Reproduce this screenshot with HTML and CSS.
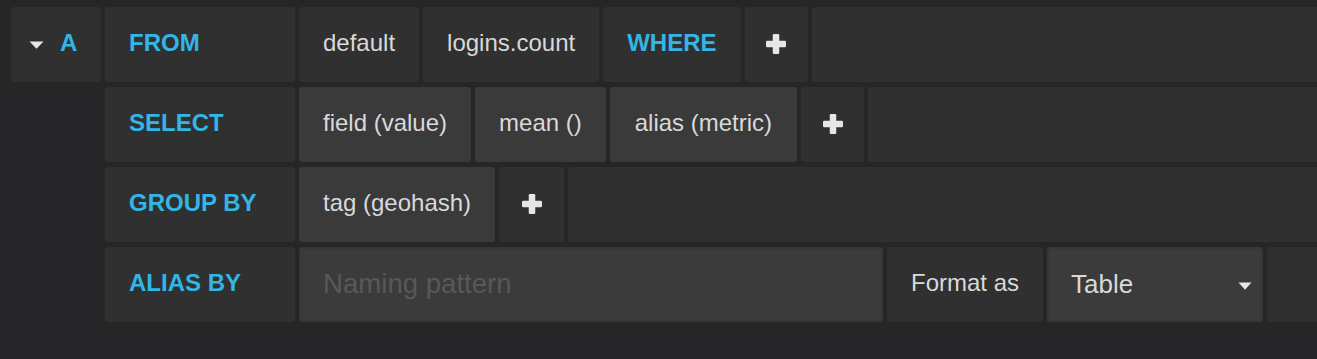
FILE: index.html
```html
<!DOCTYPE html>
<html>
<head>
<meta charset="utf-8">
<link rel="stylesheet" href="styles.css">
</head>
<body>
<div class="editor">
  <div class="row">
    <div class="refid">
      <svg class="caret" width="15" height="8" viewBox="0 0 15 8"><path d="M0.5 0.5 L14.5 0.5 L7.5 7.8 Z" fill="#e6e6e6"/></svg>
      <span class="refid-letter">A</span>
    </div>
    <div class="box label kw">FROM</div>
    <div class="box seg">default</div>
    <div class="box seg">logins.count</div>
    <div class="box seg kw">WHERE</div>
    <div class="box plus"><svg width="20" height="20" viewBox="0 0 20 20"><rect x="6.75" y="0" width="6.5" height="20" rx="1.2" fill="#e6e6e6"/><rect x="0" y="6.75" width="20" height="6.5" rx="1.2" fill="#e6e6e6"/></svg></div>
    <div class="box filler"></div>
  </div>
  <div class="row">
    <div class="spacer"></div>
    <div class="box label kw">SELECT</div>
    <div class="box seg light">field (value)</div>
    <div class="box seg light">mean ()</div>
    <div class="box seg light wide2">alias (metric)</div>
    <div class="box plus"><svg width="20" height="20" viewBox="0 0 20 20"><rect x="6.75" y="0" width="6.5" height="20" rx="1.2" fill="#e6e6e6"/><rect x="0" y="6.75" width="20" height="6.5" rx="1.2" fill="#e6e6e6"/></svg></div>
    <div class="box filler"></div>
  </div>
  <div class="row">
    <div class="spacer"></div>
    <div class="box label kw">GROUP BY</div>
    <div class="box seg light">tag (geohash)</div>
    <div class="box plus plus-wide"><svg width="20" height="20" viewBox="0 0 20 20"><rect x="6.75" y="0" width="6.5" height="20" rx="1.2" fill="#e6e6e6"/><rect x="0" y="6.75" width="20" height="6.5" rx="1.2" fill="#e6e6e6"/></svg></div>
    <div class="box filler"></div>
  </div>
  <div class="row">
    <div class="spacer"></div>
    <div class="box label kw">ALIAS BY</div>
    <div class="box input"><span class="placeholder">Naming pattern</span></div>
    <div class="box seg format">Format as</div>
    <div class="box select">
      <span class="select-value">Table</span>
      <svg class="select-caret" width="14" height="8" viewBox="0 0 14 8"><path d="M0.5 0.5 L13.5 0.5 L7 7.8 Z" fill="#e6e6e6"/></svg>
    </div>
    <div class="box filler"></div>
  </div>
</div>
</body>
</html>
```

FILE: styles.css
```css
html, body {
  margin: 0;
  padding: 0;
  background: #262628;
  overflow: hidden;
}

body {
  font-family: "Liberation Sans", Arial, sans-serif;
  font-size: 24px;
  color: #d8d9da;
}

.editor {
  display: flex;
  flex-direction: column;
  gap: 5px;
  padding: 7px 0 0 11px;
  margin-right: -20px;
}

.row {
  display: flex;
  gap: 4px;
  height: 75px;
}

.refid {
  width: 90px;
  flex: none;
  background: #303030;
  border-radius: 3px;
  display: flex;
  align-items: center;
  box-sizing: border-box;
  padding-left: 18px;
  gap: 16px;
}

.caret {
  display: block;
  margin-top: 1px;
}

.refid-letter {
  color: #33b5e5;
  font-weight: bold;
  padding-bottom: 3px;
}

.spacer {
  width: 90px;
  flex: none;
}

.box {
  flex: none;
  background: #303030;
  border-radius: 3px;
  display: flex;
  align-items: center;
  box-sizing: border-box;
  padding: 0 24px 4px;
  white-space: nowrap;
}

.label {
  width: 190px;
}

.kw {
  color: #33b5e5;
  font-weight: bold;
}

.light {
  background: #3a3a3a;
}

.wide2 {
  padding: 0 25px 4px;
}

.plus {
  width: 63px;
  justify-content: center;
  padding: 0 0 2px;
}

.plus-wide {
  width: 65px;
}

.plus svg {
  display: block;
}

.filler {
  flex: 1;
}

.input {
  width: 584px;
  background: #3b3b3b;
  border: 2px solid #363636;
  padding: 0 22px 2px;
  font-size: 27.6px;
}

.placeholder {
  color: #585858;
}

.format {
  width: 156px;
  justify-content: center;
  padding: 0 0 4px;
}

.select {
  width: 216px;
  background: #3b3b3b;
  border: 2px solid #363636;
  padding: 0 9px 0 22px;
  font-size: 26px;
  justify-content: space-between;
}

.select-caret {
  display: block;
  margin-top: 2px;
}
```
